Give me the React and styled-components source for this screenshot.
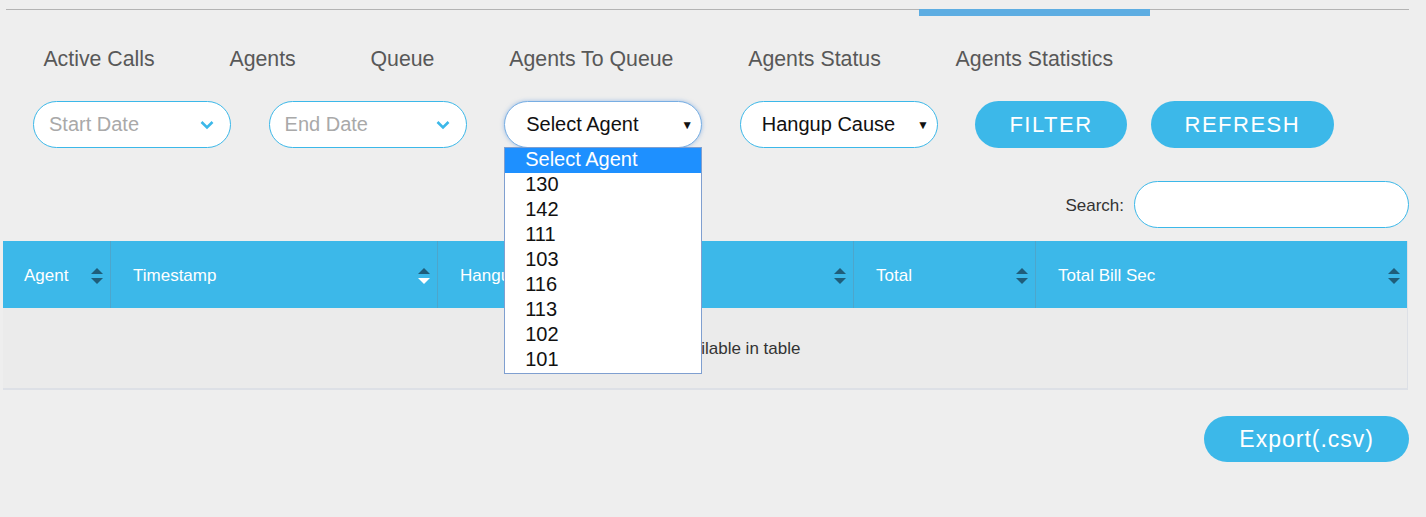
import React from "react";
import styled, { createGlobalStyle } from "styled-components";

const Global = createGlobalStyle`
  html, body { margin: 0; padding: 0; background: #eeeeee; }
  body { font-family: "Liberation Sans", Arial, sans-serif; }
  * { box-sizing: border-box; }
`;

const BLUE = "#3cb8e9";

const Page = styled.div`
  padding-top: 9px;
  width: 1426px;
  height: 517px;
  overflow: hidden;
`;

const TabBar = styled.nav`
  display: flex;
  margin: 0 17px 0 6px;
  border-top: 1px solid #b3b3b3;
`;

const Tab = styled.div`
  position: relative;
  padding: 38px 37.4px 0;
  font-size: 21.3px;
  line-height: 22px;
  color: #585858;
  white-space: nowrap;
  ${(p) =>
    p.$active &&
    `
    &::before {
      content: "";
      position: absolute;
      left: 1px; right: 0; top: -1px;
      height: 7px;
      background: #5dade2;
    }
  `}
`;

const FilterRow = styled.div`
  display: flex;
  align-items: center;
  gap: 37.6px;
  margin-top: 31px;
  padding-left: 33px;
`;

const Pill = styled.div`
  position: relative;
  width: 198px;
  height: 47px;
  border-radius: 24px;
  background: #fff;
  border: 1px solid ${(p) => (p.$focused ? "#78aee3" : BLUE)};
  box-shadow: ${(p) => (p.$focused ? "0 0 4px rgba(90,150,220,0.55)" : "none")};
  display: flex;
  align-items: center;
  justify-content: space-between;
  padding: 0 ${(p) => (p.$select ? "8px" : "16px")} 0 ${(p) => (p.$select ? "21px" : "15px")};
  font-size: 20px;
  color: ${(p) => (p.$placeholder ? "#a9a9a9" : "#111")};
`;

const Arrow = styled.span`
  font-size: 12px;
  color: #111;
`;

const ButtonGroup = styled.div`
  display: flex;
  gap: 24px;
`;

const Button = styled.button`
  height: ${(p) => p.$h || 47}px;
  padding: 0 ${(p) => p.$px || 34}px;
  border: none;
  border-radius: 24px;
  background: ${BLUE};
  color: #fff;
  font-family: "Liberation Sans", Arial, sans-serif;
  font-size: ${(p) => p.$fs || 22}px;
  letter-spacing: ${(p) => p.$ls || 1.5}px;
  cursor: pointer;
`;

const Dropdown = styled.ul`
  position: absolute;
  top: 45px;
  left: -1px;
  width: 198px;
  height: 227px;
  margin: 0;
  padding: 0;
  list-style: none;
  background: #fff;
  border: 1px solid #7f9fd0;
  overflow: hidden;
  z-index: 5;
`;

const Option = styled.li`
  height: 25px;
  line-height: 23px;
  padding-left: 20px;
  font-size: 20px;
  color: ${(p) => (p.$selected ? "#fff" : "#111")};
  background: ${(p) => (p.$selected ? "#1e90ff" : "#fff")};
`;

const SearchRow = styled.div`
  display: flex;
  justify-content: flex-end;
  align-items: center;
  gap: 10px;
  margin: 33px 17px 0 0;
  font-size: 17px;
  color: #333;
  padding-top: 2px;
`;

const SearchInput = styled.div`
  width: 275px;
  height: 47px;
  margin-top: -2px;
  border-radius: 24px;
  border: 1px solid ${BLUE};
  background: #fff;
`;

const Table = styled.div`
  margin: 13px 18px 0 3px;
  border-right: 1px solid #dde0e6;
  border-bottom: 2px solid #dde0e6;
`;

const HeaderRow = styled.div`
  display: grid;
  grid-template-columns: 107px 327px 416px 182px 1fr;
  height: 67px;
  background: ${BLUE};
`;

const HeadCell = styled.div`
  display: flex;
  align-items: center;
  justify-content: space-between;
  padding: 2px 6px 0 ${(p) => (p.$first ? 21 : 22)}px;
  color: #fff;
  font-size: 17px;
  border-left: ${(p) => (p.$first ? "none" : "1px solid #4da6cc")};
`;

const Body = styled.div`
  height: 80px;
  background: #ebebeb;
  display: flex;
  align-items: center;
  justify-content: center;
  font-size: 17px;
  color: #333;
  padding-top: 2px;
`;

const Footer = styled.div`
  display: flex;
  justify-content: flex-end;
  margin: 26px 17px 0 0;
`;

const SortIcon = ({ down }) => (
  <svg width="14" height="22" viewBox="0 0 14 22">
    <path d="M1 9 L7 3 L13 9 Z" fill="#1f5d7a" />
    <path d="M1 13 L7 19 L13 13 Z" fill={down ? "#ffffff" : "#1f5d7a"} />
  </svg>
);

const Chevron = () => (
  <svg width="14" height="10" viewBox="0 0 14 10">
    <polyline points="1.5,2 7,7.5 12.5,2" fill="none" stroke={BLUE} strokeWidth="2.6" />
  </svg>
);

const tabs = ["Active Calls", "Agents", "Queue", "Agents To Queue", "Agents Status", "Agents Statistics"];
const agents = ["130", "142", "111", "103", "116", "113", "102", "101", "104"];
const cols = ["Agent", "Timestamp", "Hangup Cause", "Total", "Total Bill Sec"];

export default function App() {
  return (
    <Page>
      <Global />
      <TabBar>
        {tabs.map((t, i) => (
          <Tab key={t} $active={i === 5}>{t}</Tab>
        ))}
      </TabBar>
      <FilterRow>
        <Pill $placeholder>
          Start Date
          <Chevron />
        </Pill>
        <Pill $placeholder>
          End Date
          <Chevron />
        </Pill>
        <Pill $select $focused>
          Select Agent
          <Arrow>▼</Arrow>
          <Dropdown>
            <Option $selected>Select Agent</Option>
            {agents.map((a) => (
              <Option key={a}>{a}</Option>
            ))}
          </Dropdown>
        </Pill>
        <Pill $select>
          Hangup Cause
          <Arrow>▼</Arrow>
        </Pill>
        <ButtonGroup>
          <Button>FILTER</Button>
          <Button>REFRESH</Button>
        </ButtonGroup>
      </FilterRow>
      <SearchRow>
        Search:
        <SearchInput />
      </SearchRow>
      <Table>
        <HeaderRow>
          {cols.map((c, i) => (
            <HeadCell key={c} $first={i === 0}>
              {c}
              <SortIcon down={i === 1} />
            </HeadCell>
          ))}
        </HeaderRow>
        <Body>No data available in table</Body>
      </Table>
      <Footer>
        <Button $h={46} $px={35} $fs={23} $ls={1}>Export(.csv)</Button>
      </Footer>
    </Page>
  );
}
